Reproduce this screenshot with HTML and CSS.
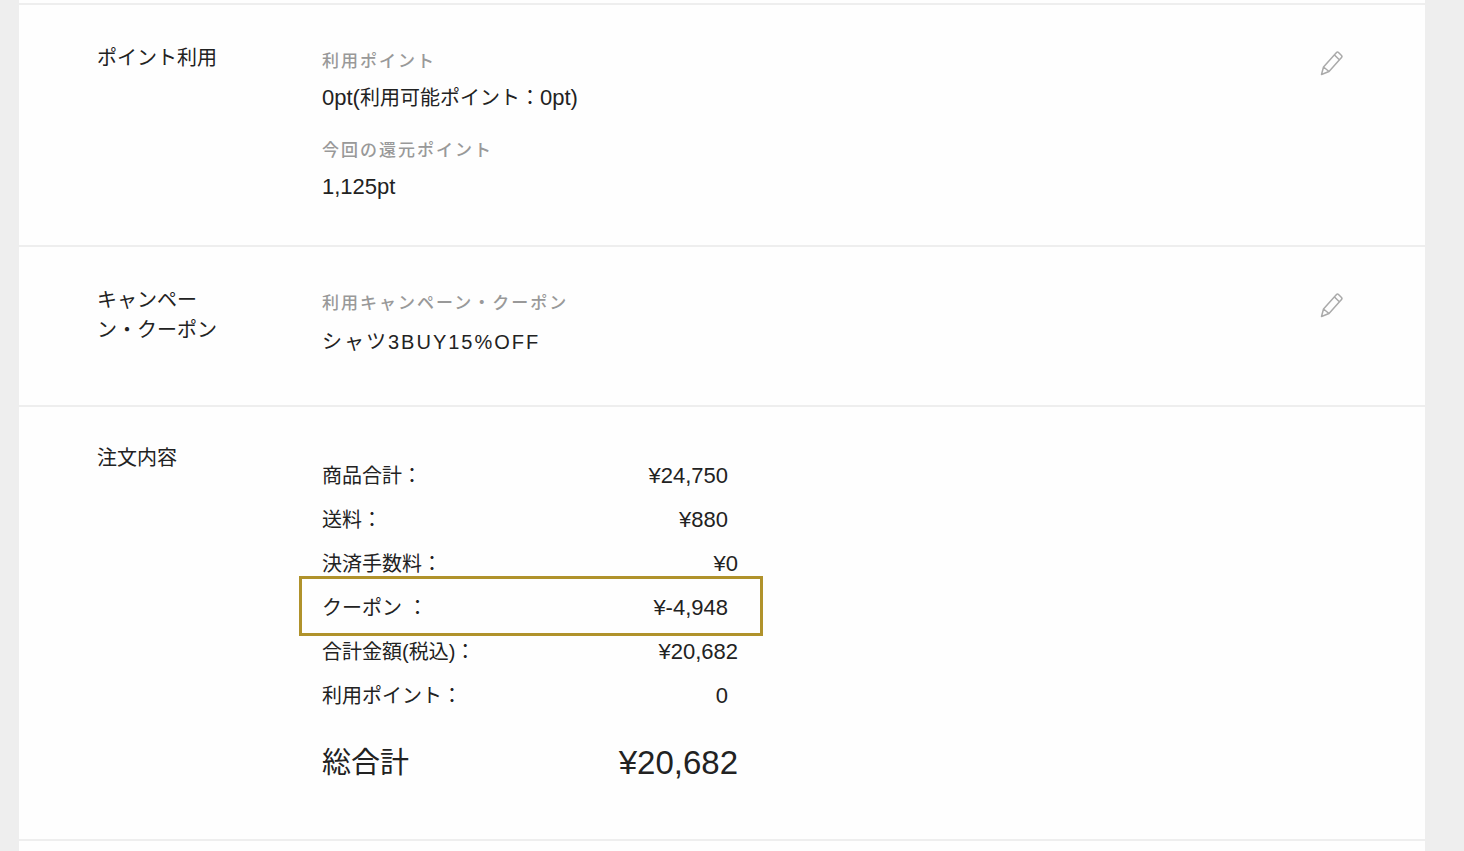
FILE: index.html
```html
<!DOCTYPE html>
<html lang="ja">
<head>
  <meta charset="UTF-8">
  <title>ご注文内容の確認</title>
  <link rel="stylesheet" href="styles.css">
</head>
<body>
  <main class="confirm">

    <section class="block">
      <h2>ポイント利用</h2>
      <dl class="detail">
        <dt>利用ポイント</dt>
        <dd><span class="num">0pt(</span>利用可能ポイント：<span class="num">0pt)</span></dd>
        <dt>今回の還元ポイント</dt>
        <dd><span class="num">1,125pt</span></dd>
      </dl>
      <button class="edit" type="button" aria-label="ポイント利用を変更">
        <svg viewBox="0 0 24 26" width="24" height="26">
          <path d="M1.5 24.5L3.5 17L16.5 2.5Q17.5 1.5 18.5 2.5L21.5 5.5Q22.5 6.5 21.5 7.5L9 21.5ZM3.5 17L9 21.5M14.5 5L19.3 9.8M1.8 23L3.2 24"/>
        </svg>
      </button>
    </section>

    <section class="block campaign">
      <h2>キャンペーン・クーポン</h2>
      <dl class="detail">
        <dt>利用キャンペーン・クーポン</dt>
        <dd class="coupon">シャツ3BUY15%OFF</dd>
      </dl>
      <button class="edit" type="button" aria-label="クーポンを変更">
        <svg viewBox="0 0 24 26" width="24" height="26">
          <path d="M1.5 24.5L3.5 17L16.5 2.5Q17.5 1.5 18.5 2.5L21.5 5.5Q22.5 6.5 21.5 7.5L9 21.5ZM3.5 17L9 21.5M14.5 5L19.3 9.8M1.8 23L3.2 24"/>
        </svg>
      </button>
    </section>

    <section class="block order">
      <h2>注文内容</h2>
      <table class="amounts">
        <tr><th scope="row">商品合計：</th><td class="indent">¥24,750</td></tr>
        <tr><th scope="row">送料：</th><td class="indent">¥880</td></tr>
        <tr><th scope="row">決済手数料：</th><td>¥0</td></tr>
        <tr class="marked"><th scope="row">クーポン ：</th><td class="indent">¥-4,948</td></tr>
        <tr><th scope="row">合計金額(税込)：</th><td>¥20,682</td></tr>
        <tr><th scope="row">利用ポイント：</th><td class="indent">0</td></tr>
        <tr class="total"><th scope="row">総合計</th><td>¥20,682</td></tr>
      </table>
    </section>

  </main>
</body>
</html>
```

FILE: styles.css
```css
* {
  box-sizing: border-box;
}
body {
  margin: 0;
  background: #eee;
  color: #222;
  font-family: "Liberation Sans", "Noto Sans CJK JP", sans-serif;
  font-size: 20px;
  line-height: 30px;
}
.confirm {
  min-height: 100vh;
  margin: 0 39px 0 19px;
  padding-top: 3px;
  background: #fefefe;
}

/* one row of the confirmation: title, content, edit button */
.block {
  display: grid;
  grid-template-columns: 125px 1fr 24px;
  column-gap: 100px;
  align-items: start;
  padding: 38px 81px 43px 78px;
  border-top: 2px solid #eee;
}
h2 {
  margin: 0;
  font-size: 20px;
  font-weight: normal;
}

.detail {
  margin: 0;
}
dt {
  margin-top: 4px;
  color: #999;
  font-size: 17px;
  font-weight: 500;
  letter-spacing: 2px;
}
dd {
  height: 30px;
  margin: 6px 0 0;
}
dd + dt {
  margin-top: 23px;
}
/* latin digits run smaller than the kana, so bump them */
.num,
td {
  font-size: 22px;
}
.campaign {
  padding-bottom: 48px;
}
.coupon {
  margin-top: 8px;
  letter-spacing: 2px;
}

.edit {
  width: 24px;
  height: 26px;
  margin-top: 7px;
  padding: 0;
  border: 0;
  background: none;
  cursor: pointer;
}
.edit svg {
  display: block;
  fill: none;
  stroke: #aaa;
  stroke-width: 1.5;
  stroke-linejoin: round;
}

.order {
  padding-top: 36px;
  padding-bottom: 31px;
  border-bottom: 2px solid #eee;
}
.amounts {
  width: 416px;
  margin-top: 11px;
  border-collapse: collapse;
}
.amounts tr {
  height: 44px;
}
th,
td {
  padding: 0;
  font-weight: normal;
}
th {
  text-align: left;
}
td {
  text-align: right;
}
.indent {
  padding-right: 10px;
}
.marked {
  position: relative;
}
.marked th::before {
  content: "";
  position: absolute;
  top: -10px;
  right: -25px;
  bottom: -6px;
  left: -23px;
  border: 3px solid #b0922b;
}
.amounts .total {
  height: 90px;
}
.total th {
  font-size: 29px;
}
.total td {
  font-size: 33px;
}
```
